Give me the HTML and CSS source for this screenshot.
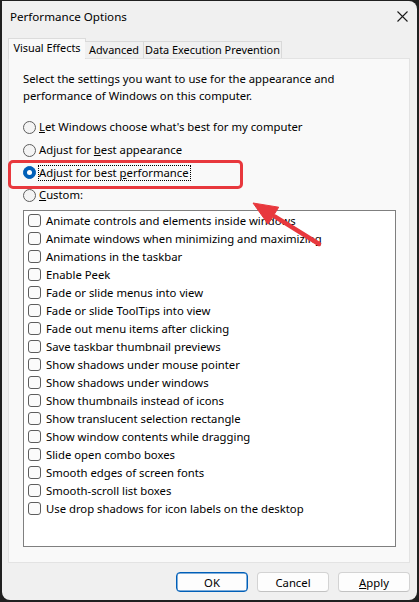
FILE: index.html
```html
<!DOCTYPE html>
<html>
<head>
<meta charset="utf-8">
<title>Performance Options</title>
<link rel="stylesheet" href="styles.css">
</head>
<body>
<div class="window">
  <div class="titlebar">
    <span class="title">Performance Options</span>
    <svg class="close" width="11" height="11" viewBox="0 0 11 11"><path d="M0.5 0.5 L10.5 10.5 M10.5 0.5 L0.5 10.5" stroke="#1b1b1b" stroke-width="1.1" fill="none"/></svg>
  </div>
  <div class="tabs">
    <div class="tab active tab-ve">Visual Effects</div>
    <div class="tab tab-adv">Advanced</div>
    <div class="tab tab-dep">Data Execution Prevention</div>
  </div>
  <div class="panel">
    <p class="desc">Select the settings you want to use for the appearance and<br>performance of Windows on this computer.</p>
    <div class="radios">
      <div class="radio"><span class="rb"></span><span class="rl"><u>L</u>et Windows choose what's best for my computer</span></div>
      <div class="radio"><span class="rb"></span><span class="rl">Adjust for <u>b</u>est appearance</span></div>
      <div class="radio"><span class="rb on"></span><span class="rl focus">Adjust for best <u>p</u>erformance</span></div>
      <div class="radio"><span class="rb"></span><span class="rl"><u>C</u>ustom:</span></div>
    </div>
    <div class="list">
      <div class="item"><span class="cb"></span>Animate controls and elements inside windows</div>
      <div class="item"><span class="cb"></span>Animate windows when minimizing and maximizing</div>
      <div class="item"><span class="cb"></span>Animations in the taskbar</div>
      <div class="item"><span class="cb"></span>Enable Peek</div>
      <div class="item"><span class="cb"></span>Fade or slide menus into view</div>
      <div class="item"><span class="cb"></span>Fade or slide ToolTips into view</div>
      <div class="item"><span class="cb"></span>Fade out menu items after clicking</div>
      <div class="item"><span class="cb"></span>Save taskbar thumbnail previews</div>
      <div class="item"><span class="cb"></span>Show shadows under mouse pointer</div>
      <div class="item"><span class="cb"></span>Show shadows under windows</div>
      <div class="item"><span class="cb"></span>Show thumbnails instead of icons</div>
      <div class="item"><span class="cb"></span>Show translucent selection rectangle</div>
      <div class="item"><span class="cb"></span>Show window contents while dragging</div>
      <div class="item"><span class="cb"></span>Slide open combo boxes</div>
      <div class="item"><span class="cb"></span>Smooth edges of screen fonts</div>
      <div class="item"><span class="cb"></span>Smooth-scroll list boxes</div>
      <div class="item"><span class="cb"></span>Use drop shadows for icon labels on the desktop</div>
    </div>
  </div>
  <div class="buttons">
    <div class="btn default">OK</div>
    <div class="btn">Cancel</div>
    <div class="btn"><u>A</u>pply</div>
  </div>
</div>
<div class="highlight"></div>
<svg class="arrow" width="419" height="602" viewBox="0 0 419 602">
  <line x1="275" y1="216.7" x2="319" y2="244" stroke="#e8383d" stroke-width="4.5" stroke-linecap="round"/>
  <polygon points="253,203 268.1,224.2 278.7,207.2" fill="#e8383d" stroke="#e8383d" stroke-width="1" stroke-linejoin="round"/>
</svg>
</body>
</html>
```
FILE: styles.css
```css
html, body {
  margin: 0;
  padding: 0;
}
body {
  width: 419px;
  height: 602px;
  overflow: hidden;
  position: relative;
  background: #202020;
  font-family: "Noto Sans", "Segoe UI", sans-serif;
  font-size: 11.3px;
  color: #000;
}
.window {
  margin: 1px 2px 0 2px;
  width: 415px;
  height: 599px;
  background: #f0f0f0;
  border-radius: 0 8px 8px 8px;
  overflow: hidden;
}
.titlebar {
  height: 31px;
  display: flex;
  align-items: center;
  justify-content: space-between;
  padding: 0 9px 0 8px;
}
.title {
  font-size: 11.6px;
}
.close {
  display: block;
}
.tabs {
  display: flex;
  align-items: flex-end;
  height: 21px;
  margin-top: 6px;
  margin-bottom: -1px;
  padding-left: 6px;
  position: relative;
  z-index: 1;
}
.tab {
  box-sizing: border-box;
  height: 17px;
  margin-bottom: 1px;
  border: 1px solid #d9d9d9;
  border-bottom: none;
  background: #f0f0f0;
  text-align: center;
  font-size: 10.9px;
  line-height: 15px;
  white-space: nowrap;
  overflow: hidden;
}
.tab.active {
  height: 21px;
  margin-bottom: 0;
  background: #f9f9f9;
  border-color: #dcdcdc;
  line-height: 18px;
}
.tab-ve { width: 78px; }
.tab-adv { width: 59px; margin-left: -1px; border-left: none; }
.tab-dep { width: 139px; margin-left: -1px; }
.panel {
  margin-left: 6px;
  width: 402px;
  height: 505px;
  box-sizing: border-box;
  border: 1px solid #e3e3e3;
  background: #f9f9f9;
  padding: 11px 0 0 14px;
}
.desc {
  margin: 0;
  line-height: 17px;
}
.radios {
  margin-top: 12px;
}
.radio {
  height: 22.7px;
  display: flex;
  align-items: center;
}
.rb {
  width: 13px;
  height: 13px;
  box-sizing: border-box;
  border: 1px solid #5e5e5e;
  border-radius: 50%;
  background: #f4f4f4;
  margin-right: 3px;
  display: flex;
  align-items: center;
  justify-content: center;
}
.rb.on {
  background: #005fb8;
  border-color: #005fb8;
}
.rb.on::after {
  content: "";
  width: 5px;
  height: 5px;
  border-radius: 50%;
  background: #fff;
}
.rl {
  line-height: 14px;
}
.focus {
  outline: 1px dotted #000;
  padding: 0 1px 0 0;
}
.list {
  margin-top: 3px;
  width: 373px;
  height: 337px;
  box-sizing: border-box;
  border: 1px solid #7f7f7f;
  background: #fff;
  padding: 1px 0 0 4px;
}
.item {
  height: 18px;
  display: flex;
  align-items: center;
  gap: 5px;
}
.cb {
  width: 13px;
  height: 13px;
  box-sizing: border-box;
  border: 1px solid #5e5e5e;
  border-radius: 3px;
  background: #fbfbfb;
  flex: none;
}
.buttons {
  margin-top: 9px;
  display: flex;
  justify-content: flex-end;
  gap: 9px;
  padding-right: 7px;
}
.btn {
  width: 72px;
  height: 20px;
  box-sizing: border-box;
  border: 1px solid #d3d3d3;
  border-bottom-color: #c2c2c2;
  border-radius: 4px;
  background: #fdfdfd;
  display: flex;
  align-items: center;
  justify-content: center;
}
.btn.default {
  border: 1px solid #005fb8;
  box-shadow: inset 0 0 0 0.5px #005fb8;
}
.highlight {
  position: absolute;
  left: 8px;
  top: 160px;
  width: 235px;
  height: 29px;
  box-sizing: border-box;
  border: 3.5px solid #e8383d;
  border-radius: 5px;
}
.arrow {
  position: absolute;
  left: 0;
  top: 0;
  pointer-events: none;
}
```
